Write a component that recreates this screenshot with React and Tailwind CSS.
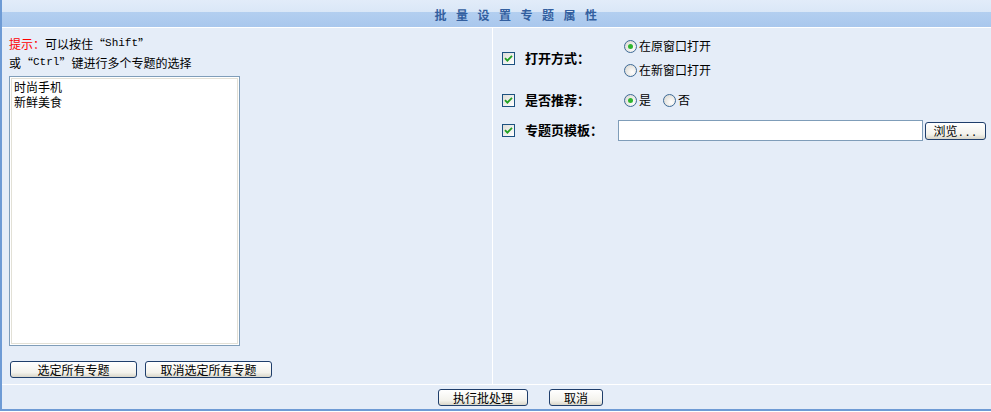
import React from "react";

const cn = '"Noto Sans CJK SC", "DejaVu Sans", sans-serif';

function Check() {
  return (
    <span className="inline-flex h-[13px] w-[13px] items-center justify-center border border-[#1c5180] bg-[linear-gradient(135deg,#dcdcd7,#ffffff)]">
      <svg width="9" height="9" viewBox="0 0 9 9">
        <path d="M1 4.2 L3.4 6.6 L8 1.8" fill="none" stroke="#21a121" strokeWidth="1.8" />
      </svg>
    </span>
  );
}

function Radio({ on }) {
  return (
    <span className="inline-flex h-[13px] w-[13px] items-center justify-center rounded-full border border-[#3d6a96] bg-[radial-gradient(circle_at_65%_65%,#ffffff,#d5d3cc)]">
      {on && <span className="h-[5px] w-[5px] rounded-full bg-[#2fb52f]" />}
    </span>
  );
}

function Btn({ children, w }) {
  return (
    <button
      className={`h-[17px] ${w} rounded-[3px] border border-[#1f3e6b] bg-[linear-gradient(#ffffff,#f3f2ec_70%,#d9d6c9)] text-[12px] leading-[15px] text-black`}
    >
      {children}
    </button>
  );
}

export default function App() {
  return (
    <div className="w-[991px] bg-white text-[12px] text-black" style={{ fontFamily: cn }}>
      <div className="border-b-2 border-l-2 border-[#6e9bd5]">
        <div className="flex h-[27px] items-center justify-center bg-[linear-gradient(#e2ecf9_0,#dae7f7_44%,#b3cff0_44%,#a9c7ed_100%)] pl-[48px] pt-[2px]">
          <span className="text-[12px] font-bold tracking-[9.5px] text-[#335f9f]">批量设置专题属性</span>
        </div>
        <div className="h-px bg-white" />
        <div className="flex h-[356px] bg-[#e5edf8]">
          <div className="flex w-[491px] flex-col border-r border-white pl-[7px] pt-[6px]">
            <div className="flex h-[19px] items-center whitespace-nowrap leading-none">
              <span className="text-[#ff0000]">提示：</span>可以按住“<span className="font-['Liberation_Mono'] text-[11px]">Shift</span>”
            </div>
            <div className="flex h-[19px] items-center whitespace-nowrap leading-none">
              或“<span className="font-['Liberation_Mono'] text-[11px]">Ctrl</span>”键进行多个专题的选择
            </div>
            <div className="mt-[4px] h-[270px] w-[231px] shrink-0 border border-[#7f9db9] bg-white p-px">
              <div className="h-full border border-[#e2e0d6] pl-[2px] leading-[15px]">
                <div>时尚手机</div>
                <div>新鲜美食</div>
              </div>
            </div>
            <div className="mt-[15px] flex gap-[8px] pl-[1px]">
              <Btn w="w-[127px]">选定所有专题</Btn>
              <Btn w="w-[127px]">取消选定所有专题</Btn>
            </div>
          </div>
          <div className="flex flex-1 flex-col pl-[9px] pr-[5px] pt-[6px]">
            <div className="flex h-[48px] items-center">
              <div className="w-[23px]"><Check /></div>
              <div className="w-[99px] text-[13px] font-bold">打开方式：</div>
              <div className="flex flex-col">
                <div className="flex h-[24px] items-center gap-[2px]"><Radio on />在原窗口打开</div>
                <div className="flex h-[24px] items-center gap-[2px]"><Radio />在新窗口打开</div>
              </div>
            </div>
            <div className="flex h-[36px] items-center">
              <div className="w-[23px]"><Check /></div>
              <div className="w-[99px] text-[13px] font-bold">是否推荐：</div>
              <div className="flex items-center gap-[2px]"><Radio on />是</div>
              <div className="ml-[12px] flex items-center gap-[2px]"><Radio />否</div>
            </div>
            <div className="flex h-[24px] items-center">
              <div className="w-[23px]"><Check /></div>
              <div className="w-[93px] text-[13px] font-bold">专题页模板：</div>
              <input className="h-[21px] w-[305px] border border-[#7f9db9] bg-white outline-none" />
              <div className="ml-[2px] mt-[2px]">
                <Btn w="w-[61px] h-[18px]">
                  浏览<span className="font-['Liberation_Mono'] text-[11px]">...</span>
                </Btn>
              </div>
            </div>
          </div>
        </div>
        <div className="h-px bg-white" />
        <div className="flex h-[24px] items-center justify-center gap-[21px] bg-[#e5edf8] pl-[48px]">
          <Btn w="w-[90px]">执行批处理</Btn>
          <Btn w="w-[54px]">取消</Btn>
        </div>
      </div>
    </div>
  );
}
